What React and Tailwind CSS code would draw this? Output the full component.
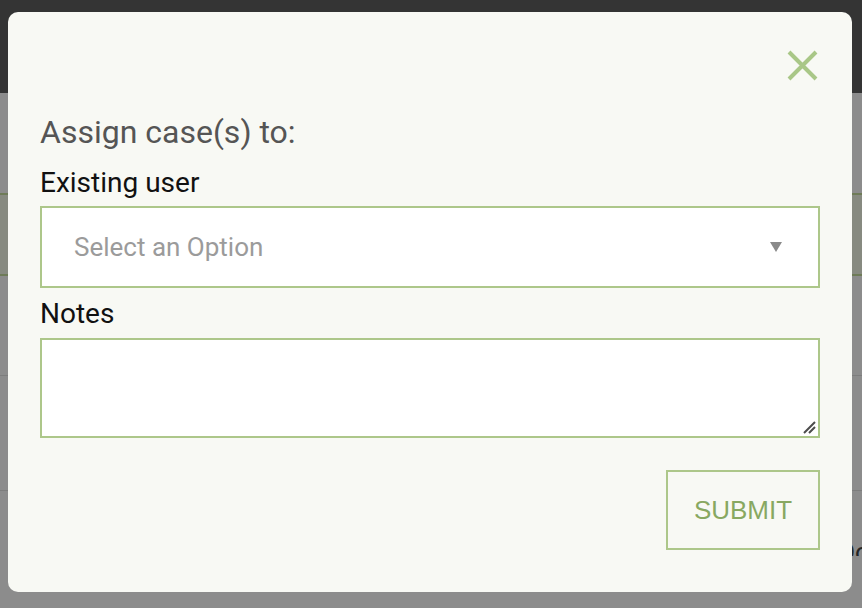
import React from "react";

function CloseIcon() {
  return (
    <svg width="31" height="31" viewBox="0 0 31 31">
      <path
        d="M2 2 L29 29 M29 2 L2 29"
        stroke="#a9c787"
        strokeWidth="4"
        fill="none"
      />
    </svg>
  );
}

function Background() {
  return (
    <div className="flex flex-col h-[608px] bg-[#8c8c8c]">
      {/* TOP BAR */}
      <div className="h-[93px] bg-[#343434]" />

      <div className="h-[100px]" />

      {/* HEADER ROW */}
      <div className="h-[83px] bg-[#878a80] border-y-2 border-[#6e7b57]" />

      <div className="h-[100px] border-b border-[#7d7d7d]" />
      <div className="h-[115px] border-b border-[#7d7d7d]" />

      {/* PARTIAL TEXT */}
      <div className="h-[65px] pl-[838px] pt-[46px] text-[26px] leading-[30px] text-[#262626] overflow-hidden whitespace-nowrap">
        Doc
      </div>

      {/* BOTTOM CELLS */}
      <div className="flex h-[16px]">
        <div className="w-[27px]" />
        <div className="w-[386px] border-l-2 border-[#677a45]" />
        <div className="w-[167px] border-l-2 border-[#677a45]" />
        <div className="flex-1 border-l-2 border-[#677a45]" />
      </div>
    </div>
  );
}

export default function App() {
  return (
    <div className="relative w-[862px] h-[608px] overflow-hidden font-['Roboto',sans-serif]">
      <Background />

      {/* MODAL */}
      <div className="absolute left-[8px] top-[12px] w-[844px] h-[580px] rounded-[10px] bg-[#f8f9f4] px-[32px] pt-[38px]">
        <div className="flex justify-end mr-[2px]">
          <button className="w-[31px] h-[31px]">
            <CloseIcon />
          </button>
        </div>

        <h2 className="mt-[32px] text-[32px] leading-[38px] text-[#555555]">
          Assign case(s) to:
        </h2>

        <label className="block mt-[16px] text-[28px] leading-[32px] text-[#111111]">
          Existing user
        </label>

        <div className="mt-[7px] h-[82px] border-2 border-[#adc78a] bg-white flex items-center justify-between pl-[32px] pr-[36px]">
          <span className="text-[26px] text-[#9b9b9b]">
            Select an Option
          </span>
          <svg width="12" height="10" viewBox="0 0 12 10">
            <path d="M0 0 L12 0 L6 10 Z" fill="#8a8a8a" />
          </svg>
        </div>

        <label className="block mt-[10px] text-[28px] leading-[32px] text-[#111111]">
          Notes
        </label>

        <div className="relative mt-[8px]">
          <textarea className="block w-full h-[100px] border-2 border-[#adc78a] bg-white outline-none resize-none" />
          {/* resize grip */}
          <svg
            className="absolute right-[4px] bottom-[4px]"
            width="13"
            height="13"
            viewBox="0 0 13 13"
          >
            <path
              d="M1 12 L12 1 M6 12 L12 6"
              stroke="#4d4d4d"
              strokeWidth="2"
              fill="none"
            />
          </svg>
        </div>

        <div className="flex justify-end mt-[32px]">
          <button className="w-[154px] h-[80px] border-2 border-[#adc78a] text-[26px] text-[#88a861] font-['Liberation_Sans',sans-serif]">
            SUBMIT
          </button>
        </div>
      </div>
    </div>
  );
}
